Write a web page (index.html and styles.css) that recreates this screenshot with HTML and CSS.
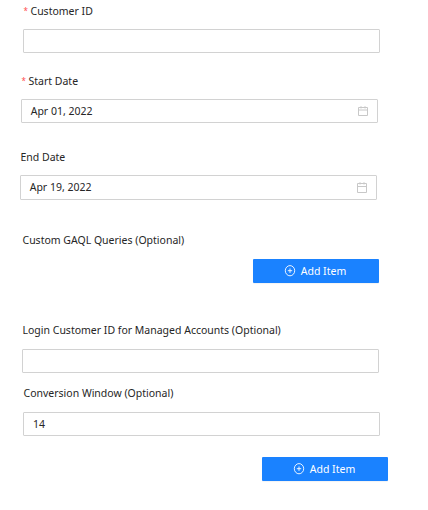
FILE: index.html
```html
<!DOCTYPE html>
<html lang="en">
<head>
<meta charset="utf-8">
<title>Report settings</title>
<link rel="stylesheet" href="styles.css">
</head>
<body>
<form class="form">
  <div class="field customer">
    <label class="label" for="customer"><span class="required">*</span>Customer ID</label>
    <input class="input" id="customer" type="text">
  </div>
  <div class="field start">
    <label class="label"><span class="required">*</span>Start Date</label>
    <div class="input picker"><span>Apr 01, 2022</span>
      <svg class="calendar" viewBox="0 0 10 10"><path d="M.5 1.5h9v8h-9zM.5 4h9M3 .2v2.3M7 .2v2.3"/></svg>
    </div>
  </div>
  <div class="field end">
    <label class="label">End Date</label>
    <div class="input picker"><span>Apr 19, 2022</span>
      <svg class="calendar" viewBox="0 0 10 11"><path d="M.5 1.5h9v9h-9zM.5 4.5h9M3 .2v2.3M7 .2v2.3"/></svg>
    </div>
  </div>
  <div class="field queries">
    <label class="label">Custom GAQL Queries (Optional)</label>
    <button class="button" type="button"><svg class="plus" viewBox="0 0 12 12"><ellipse cx="6" cy="5.7" rx="4.7" ry="5.1"/><path d="M6 3.5v4.4M3.8 5.7h4.4"/></svg>Add Item</button>
  </div>
  <div class="field login">
    <label class="label" for="login">Login Customer ID for Managed Accounts (Optional)</label>
    <input class="input" id="login" type="text">
  </div>
  <div class="field window">
    <label class="label" for="window">Conversion Window (Optional)</label>
    <input class="input" id="window" type="text" value="14">
    <button class="button" type="button"><svg class="plus" viewBox="0 0 12 12"><ellipse cx="6" cy="5.7" rx="4.7" ry="5.1"/><path d="M6 3.5v4.4M3.8 5.7h4.4"/></svg>Add Item</button>
  </div>
</form>
</body>
</html>
```
FILE: styles.css
```css
* { box-sizing: border-box; }
body { margin: 0; background: #fff; color: #262626; font: 10.5px/16px "Noto Sans", sans-serif; }
.form { display: flex; flex-direction: column; width: 428px; height: 510px; padding-top: 3px; overflow: hidden; }
.field { display: flex; flex-direction: column; flex: none; width: 357px; }
.label { display: block; height: 16px; padding-left: 0.5px; white-space: nowrap; }
.required { display: inline-block; width: 7px; color: #ff4d4f; font-size: 8px; line-height: 10px; vertical-align: 1px; }
.input { display: block; width: 357px; height: 24px; margin-top: 10px; padding: 0 9px; border: 1px solid #d2d2d2; border-radius: 1px; background: #fff; color: inherit; font: inherit; outline: none; }
.picker { display: flex; align-items: center; justify-content: space-between; padding-left: 8.7px; }
.calendar { width: 10px; height: 10px; fill: none; stroke: #c8c8c8; stroke-width: 1; }
.button { display: flex; align-items: center; justify-content: center; gap: 5px; width: 126px; height: 24px; padding: 0 2px 0 0; border: 0; border-radius: 1px; background: #1a82ff; color: #fff; font: inherit; box-shadow: 0 1px 1px rgba(0, 0, 0, 0.05); }
.plus { width: 12px; height: 12px; fill: none; stroke: currentColor; stroke-width: 0.9; }
.customer { height: 70px; margin-left: 23px; }
.start { height: 76px; margin-left: 21px; }
.end { height: 83px; margin-left: 20px; }
.end .input { height: 25px; padding-bottom: 1px; }
.end .calendar { height: 11px; }
.queries { height: 90px; margin-left: 22px; }
.queries .button { margin: 11px 0 0 231px; }
.login { height: 63px; margin-left: 22px; }
.login .input, .window .input { margin-top: 11px; }
.window { margin-left: 23px; }
.window .button { margin: 21px 0 0 239px; }
```
